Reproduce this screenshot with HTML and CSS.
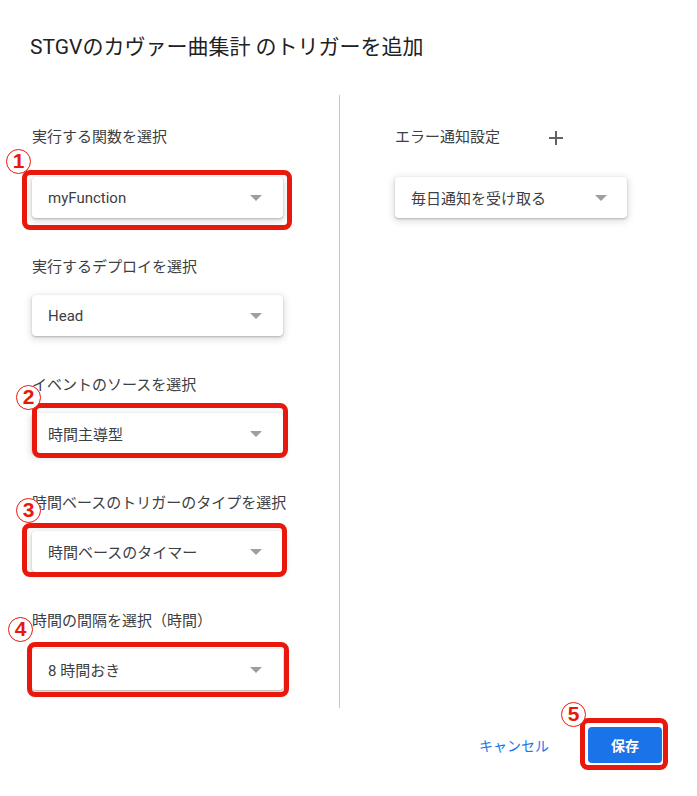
FILE: index.html
```html
<!DOCTYPE html>
<html lang="ja">
<head>
<meta charset="utf-8">
<title>トリガーを追加</title>
<link rel="stylesheet" href="styles.css">
</head>
<body>
<div class="dialog">
  <h1 class="title">STGVのカヴァー曲集計 のトリガーを追加</h1>
  <div class="body">
    <div class="col col-left">
      <div class="field field-first">
        <div class="label">実行する関数を選択</div>
        <div class="select">
          <span class="value">myFunction</span><span class="arrow"></span>
          <span class="mark mark-1"></span><span class="badge badge-1">1</span>
        </div>
      </div>
      <div class="field">
        <div class="label">実行するデプロイを選択</div>
        <div class="select">
          <span class="value">Head</span><span class="arrow"></span>
        </div>
      </div>
      <div class="field">
        <div class="label">イベントのソースを選択</div>
        <div class="select">
          <span class="value">時間主導型</span><span class="arrow"></span>
          <span class="mark mark-2"></span><span class="badge badge-2">2</span>
        </div>
      </div>
      <div class="field">
        <div class="label">時間ベースのトリガーのタイプを選択</div>
        <div class="select">
          <span class="value">時間ベースのタイマー</span><span class="arrow"></span>
          <span class="mark mark-3"></span><span class="badge badge-3">3</span>
        </div>
      </div>
      <div class="field">
        <div class="label">時間の間隔を選択（時間）</div>
        <div class="select">
          <span class="value">8 時間おき</span><span class="arrow"></span>
          <span class="mark mark-4"></span><span class="badge badge-4">4</span>
        </div>
      </div>
    </div>
    <div class="col col-right">
      <div class="label-row">
        <span class="label">エラー通知設定</span>
        <svg class="plus" width="14" height="14" viewBox="0 0 14 14" aria-hidden="true"><path d="M7 0v14M0 7h14" stroke="#5f6368" stroke-width="2" fill="none"/></svg>
      </div>
      <div class="select select-right">
        <span class="value">毎日通知を受け取る</span><span class="arrow"></span>
      </div>
    </div>
  </div>
  <div class="footer">
    <button class="btn btn-text">キャンセル</button>
    <button class="btn btn-primary">保存<span class="mark mark-5"></span><span class="badge badge-5">5</span></button>
  </div>
</div>
</body>
</html>
```
FILE: styles.css
```css
* { box-sizing: border-box; }
html, body { margin: 0; padding: 0; background: #fff; }
body {
  font-family: Roboto, "Noto Sans CJK JP", sans-serif;
  color: #202124;
  width: 697px;
  height: 796px;
  overflow: hidden;
}
.dialog { width: 697px; }
.title {
  margin: 0;
  height: 95px;
  padding: 33px 0 0 30px;
  font-size: 21px;
  line-height: 28px;
  font-weight: 400;
  color: #202124;
}
.body { display: flex; height: 613px; }
.col { padding-top: 31px; }
.col-left {
  width: 340px;
  padding-left: 32px;
  border-right: 1px solid #c6c6c6;
}
.col-right { flex: 1; padding-left: 55px; }
.field { margin-bottom: 38px; }
.field-first .label { margin-bottom: 31px; }
.label {
  font-family: "Noto Sans CJK JP", sans-serif;
  font-size: 15px;
  line-height: 20px;
  color: #3c4043;
  margin-bottom: 19px;
}
.label-row { display: flex; align-items: center; margin-bottom: 31px; }
.label-row .label { margin-bottom: 0; }
.plus { margin-left: 49px; margin-top: 3px; }
.select {
  position: relative;
  width: 251px;
  height: 41px;
  display: flex;
  align-items: center;
  padding: 0 21px 0 16px;
  background: #fff;
  border-radius: 4px;
  box-shadow: 0 1px 2px rgba(60,64,67,.3), 0 2px 6px 2px rgba(60,64,67,.15);
}
.select-right { width: 232px; padding-left: 16px; padding-right: 20px; }
.value {
  flex: 1;
  font-size: 15px;
  color: #3c4043;
  white-space: nowrap;
}
.arrow {
  width: 0; height: 0;
  border-left: 6px solid transparent;
  border-right: 6px solid transparent;
  border-top: 6px solid #9e9e9e;
}
.footer {
  display: flex;
  justify-content: flex-end;
  align-items: center;
  padding: 19px 35px 0 0;
}
.btn {
  font-family: "Noto Sans CJK JP", sans-serif;
  font-size: 14px;
  border: 0;
  background: none;
  cursor: pointer;
  height: 36px;
}
.btn-text { color: #1a73e8; padding: 0 8px; margin-right: 31px; }
.btn-primary {
  position: relative;
  width: 74px;
  background: #1a73e8;
  color: #fff;
  font-weight: 700;
  border-radius: 4px;
  padding: 0;
}
.mark {
  position: absolute;
  border: 5px solid #e8180d;
  border-radius: 8px;
  pointer-events: none;
}
.mark-1 { left: -10px; top: -7px; right: -9px; bottom: -12px; }
.mark-2 { left: 0; top: -10px; right: -5px; bottom: -4px; }
.mark-3 { left: -10px; top: -8px; right: -4px; bottom: -5px; }
.mark-4 { left: -5px; top: -7px; right: -6px; bottom: -7px; }
.mark-5 { left: -8px; top: -9px; right: -6px; bottom: -7px; }
.badge {
  position: absolute;
  width: 25px;
  height: 25px;
  border: 1.5px solid #e8180d;
  border-radius: 50%;
  background: #fff;
  color: #e8180d;
  font-family: "Liberation Sans", Arial, sans-serif;
  font-weight: 700;
  font-size: 21px;
  line-height: 22px;
  text-align: center;
}
.badge-1 { left: -26px; top: -28px; }
.badge-2 { left: -16px; top: -28px; }
.badge-3 { left: -16px; top: -33px; }
.badge-4 { left: -24px; top: -32px; }
.badge-5 { left: -27px; top: -25px; }
```
